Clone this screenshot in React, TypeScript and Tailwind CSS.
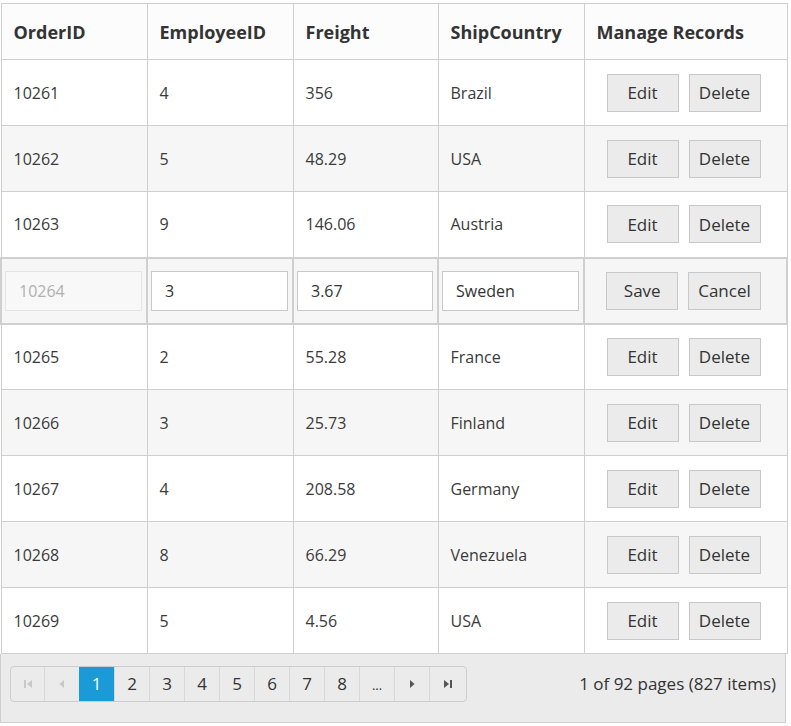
import React from 'react';

type Order = { id: number; emp: number; freight: string; country: string };

const orders: Order[] = [
  { id: 10261, emp: 4, freight: '356', country: 'Brazil' },
  { id: 10262, emp: 5, freight: '48.29', country: 'USA' },
  { id: 10263, emp: 9, freight: '146.06', country: 'Austria' },
  { id: 10264, emp: 3, freight: '3.67', country: 'Sweden' },
  { id: 10265, emp: 2, freight: '55.28', country: 'France' },
  { id: 10266, emp: 3, freight: '25.73', country: 'Finland' },
  { id: 10267, emp: 4, freight: '208.58', country: 'Germany' },
  { id: 10268, emp: 8, freight: '66.29', country: 'Venezuela' },
  { id: 10269, emp: 5, freight: '4.56', country: 'USA' },
];

const EDIT_ID = 10264;

const Btn = ({ children }: { children: React.ReactNode }) => (
  <button className="h-[38px] min-w-[72px] px-[9px] bg-[#ebebeb] border border-[#c8c8c8] text-[17px] text-[#333] leading-none">
    {children}
  </button>
);

const Actions = ({ editing }: { editing: boolean }) => (
  <div className="flex items-center justify-center gap-[10px] pr-[4px]">
    <Btn>{editing ? 'Save' : 'Edit'}</Btn>
    <Btn>{editing ? 'Cancel' : 'Delete'}</Btn>
  </div>
);

const Field = ({ value, disabled }: { value: string; disabled?: boolean }) => (
  <input
    readOnly
    value={value}
    className={`w-full h-[40px] px-[13px] text-[16px] outline-none border ${
      disabled ? 'bg-[#f8f8f8] border-[#e4e4e4] text-[#b0b0b0]' : 'bg-white border-[#c8c8c8] text-[#333]'
    }`}
  />
);

const FirstIcon = () => (
  <svg width="10" height="10" viewBox="0 0 10 10" fill="currentColor"><rect x="1" y="1" width="2" height="8" /><path d="M9 1v8L4 5z" /></svg>
);
const LastIcon = () => (
  <svg width="10" height="10" viewBox="0 0 10 10" fill="currentColor"><rect x="7" y="1" width="2" height="8" /><path d="M1 1v8l5-4z" /></svg>
);
const PrevIcon = () => (
  <svg width="8" height="10" viewBox="0 0 8 10" fill="currentColor"><path d="M6 1v8L1.5 5z" /></svg>
);
const NextIcon = () => (
  <svg width="8" height="10" viewBox="0 0 8 10" fill="currentColor"><path d="M2 1v8l4.5-4z" /></svg>
);

export default function App() {
  const cell = 'border border-[#cfcfcf] px-[12px] text-[16px] text-[#3a3a3a]';
  const head = 'border border-[#cfcfcf] px-[12px] pt-[2px] text-left text-[18px] font-bold text-[#333]';
  return (
    <div className="pt-[3px] w-[787px] bg-white" style={{ fontFamily: '"Open Sans", "Noto Sans", sans-serif' }}>
      <table className="w-[786px] table-fixed border-collapse">
        <colgroup>
          <col className="w-[146px]" />
          <col className="w-[146px]" />
          <col className="w-[145px]" />
          <col className="w-[146px]" />
          <col className="w-[203px]" />
        </colgroup>
        <thead>
          <tr className="h-[56px] bg-[#fcfcfc]">
            <th className={head}>OrderID</th>
            <th className={head}>EmployeeID</th>
            <th className={head}>Freight</th>
            <th className={head}>ShipCountry</th>
            <th className={head}>Manage Records</th>
          </tr>
        </thead>
        <tbody>
          {orders.map((o, i) => {
            const editing = o.id === EDIT_ID;
            const bg = i % 2 === 1 ? 'bg-[#f6f6f6]' : 'bg-white';
            if (editing) {
              const ec = 'border-2 border-[#cfcfcf] pl-[3px] pr-[4px]';
              return (
                <tr key={o.id} className={`h-[66px] ${bg}`}>
                  <td className={`${ec} pr-0`}><Field value={String(o.id)} disabled /></td>
                  <td className={ec}><Field value={String(o.emp)} /></td>
                  <td className={ec}><Field value={o.freight} /></td>
                  <td className={ec}><Field value={o.country} /></td>
                  <td className="border-2 border-[#cfcfcf]"><Actions editing /></td>
                </tr>
              );
            }
            return (
              <tr key={o.id} className={`h-[66px] ${bg}`}>
                <td className={cell}>{o.id}</td>
                <td className={cell}>{o.emp}</td>
                <td className={cell}>{o.freight}</td>
                <td className={cell}>{o.country}</td>
                <td className="border border-[#cfcfcf]"><Actions editing={false} /></td>
              </tr>
            );
          })}
        </tbody>
      </table>
      <div className="w-[786px] h-[69px] bg-[#ebebeb] border border-t-0 border-[#cfcfcf] flex items-start justify-between pl-[9px] pr-[9px] pt-[12px]">
        <div className="flex h-[36px] border border-[#cdcdcd] rounded-[4px] overflow-hidden text-[17px] text-[#333]">
          <span className="w-[34px] flex items-center justify-center text-[#c8c8c8] border-r border-[#d8d8d8]"><FirstIcon /></span>
          <span className="w-[34px] flex items-center justify-center text-[#c8c8c8]"><PrevIcon /></span>
          <span className="w-[35px] flex items-center justify-center bg-[#1a9bd7] text-white">1</span>
          {['2', '3', '4', '5', '6', '7', '8', '...'].map((p) => (
            <span key={p} className="w-[35px] flex items-center justify-center border-l border-[#d8d8d8]">
              {p === '...' ? <span className="text-[13px] pt-[4px]">...</span> : p}
            </span>
          ))}
          <span className="w-[35px] flex items-center justify-center border-l border-[#d8d8d8] text-[#555]"><NextIcon /></span>
          <span className="w-[37px] flex items-center justify-center border-l border-[#d8d8d8] text-[#555]"><LastIcon /></span>
        </div>
        <span className="h-[36px] flex items-center text-[17px] text-[#333]">1 of 92 pages (827 items)</span>
      </div>
    </div>
  );
}
